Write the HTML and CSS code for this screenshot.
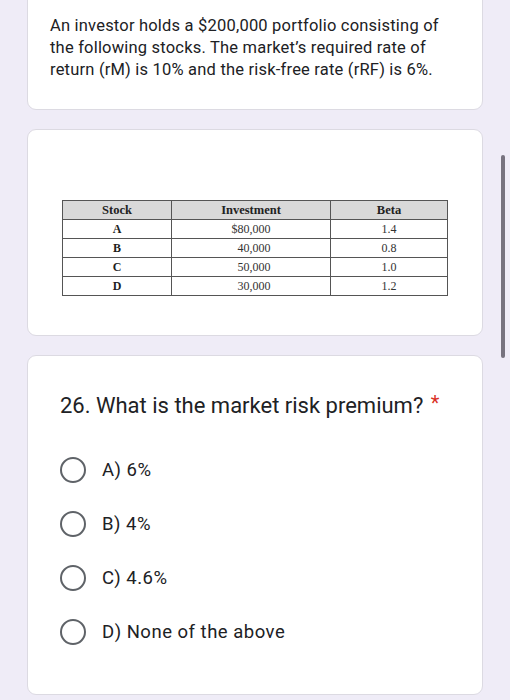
FILE: index.html
```html
<!DOCTYPE html>
<html>
<head>
<meta charset="utf-8">
<link rel="stylesheet" href="styles.css">
</head>
<body>
<div class="page">
  <div class="card card-intro">
    <p class="intro">An investor holds a $200,000 portfolio consisting of<br>the following stocks. The market’s required rate of<br>return (rM) is 10% and the risk-free rate (rRF) is 6%.</p>
  </div>
  <div class="card card-table">
    <table class="stocks">
      <thead>
        <tr><th class="c1">Stock</th><th class="c2">Investment</th><th class="c3">Beta</th></tr>
      </thead>
      <tbody>
        <tr><td class="b">A</td><td>$80,000</td><td>1.4</td></tr>
        <tr><td class="b">B</td><td><span class="pad">40,000</span></td><td>0.8</td></tr>
        <tr><td class="b">C</td><td><span class="pad">50,000</span></td><td>1.0</td></tr>
        <tr><td class="b">D</td><td><span class="pad">30,000</span></td><td>1.2</td></tr>
      </tbody>
    </table>
  </div>
  <div class="card card-question">
    <h2 class="question">26. What is the market risk premium? <span class="req">*</span></h2>
    <div class="options">
      <div class="option"><span class="radio"></span><span class="label">A) 6%</span></div>
      <div class="option"><span class="radio"></span><span class="label">B) 4%</span></div>
      <div class="option"><span class="radio"></span><span class="label">C) 4.6%</span></div>
      <div class="option"><span class="radio"></span><span class="label">D) None of the above</span></div>
    </div>
  </div>
</div>
<div class="scrollbar"></div>
</body>
</html>
```
FILE: styles.css
```css
html, body {
  margin: 0;
  padding: 0;
  background: #efecf7;
  height: 700px;
  overflow: hidden;
}
body {
  font-family: Roboto, "Noto Sans", sans-serif;
  color: #202124;
  position: relative;
}
.page {
  margin-top: -11px;
  padding-left: 27px;
  width: 456px;
  display: flex;
  flex-direction: column;
  gap: 19px;
}
.card {
  background: #ffffff;
  border: 1px solid #dcdae2;
  border-radius: 9px;
}
.card-intro {
  padding: 25px 20px 28px 22px;
}
.intro {
  margin: 0;
  font-size: 16.5px;
  line-height: 22px;
  letter-spacing: 0.2px;
  white-space: nowrap;
}
.card-table {
  padding: 70px 34px 39px 34px;
}
.stocks {
  border-collapse: collapse;
  width: 386px;
  font-family: "Liberation Serif", "Times New Roman", serif;
  font-size: 12px;
  color: #222;
  border: 1.5px solid #555;
}
.stocks th, .stocks td {
  border: 1px solid #555;
  height: 18px;
  padding: 0;
  text-align: center;
  line-height: 17px;
}
.stocks th {
  background: #d9d9d9;
  font-weight: bold;
  font-size: 12.5px;
}
.stocks .c1 { width: 108px; }
.stocks .c2 { width: 158px; }
.stocks td { color: #333; }
.stocks td.b { font-weight: bold; color: #1e1e1e; }
.pad { padding-left: 6px; }
.card-question {
  padding: 33px 32px 35px 32px;
}
.question {
  margin: 0;
  font-weight: 400;
  font-size: 22px;
  line-height: 28px;
  letter-spacing: 0px;
}
.req {
  color: #d93025;
  font-size: 20px;
  vertical-align: 3px;
  margin-left: 2px;
}
.options {
  margin-top: 23px;
  display: flex;
  flex-direction: column;
}
.option {
  height: 54px;
  display: flex;
  align-items: center;
  gap: 16px;
}
.radio {
  width: 26px;
  height: 26px;
  box-sizing: border-box;
  border: 2.5px solid #5f6368;
  border-radius: 50%;
  flex: none;
}
.label {
  font-size: 18.5px;
  line-height: 22px;
  letter-spacing: 0.5px;
}
.scrollbar {
  position: absolute;
  left: 501px;
  top: 155px;
  width: 4px;
  height: 203px;
  border-radius: 2px;
  background: #77737f;
}
```
